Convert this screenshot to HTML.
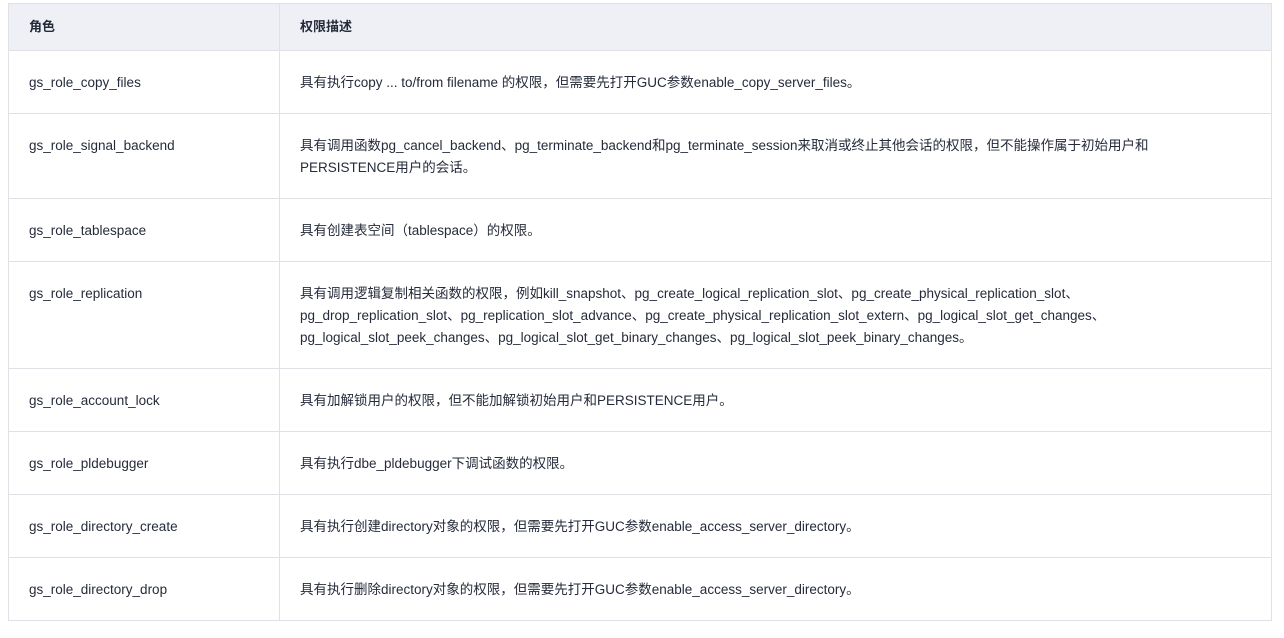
<!DOCTYPE html>
<html><head><meta charset="utf-8"><style>
body{margin:0;background:#fff;width:1284px;height:638px;overflow:hidden;font-family:"Liberation Sans","Noto Sans CJK SC",sans-serif;color:#252b3a;font-size:13.5px}
table{position:absolute;left:8px;top:3px;width:1264px;border-collapse:collapse;table-layout:fixed}
td,th{border:1px solid #dfe1e6;padding:0 0 0 20px;text-align:left;line-height:22px;white-space:nowrap}
td{vertical-align:top;padding-top:21px;padding-bottom:0}
th{background:#eef0f5;font-weight:bold;height:46px;font-size:13px;vertical-align:middle}
col.a{width:271px}
</style></head><body>
<table>
<colgroup><col class="a"><col></colgroup>
<tr><th>角色</th><th>权限描述</th></tr>
<tr style="height:63px"><td>gs_role_copy_files</td><td>具有执行copy ... to/from filename 的权限，但需要先打开GUC参数enable_copy_server_files。</td></tr>
<tr style="height:85px"><td>gs_role_signal_backend</td><td>具有调用函数pg_cancel_backend、pg_terminate_backend和pg_terminate_session来取消或终止其他会话的权限，但不能操作属于初始用户和<br>PERSISTENCE用户的会话。</td></tr>
<tr style="height:63px"><td>gs_role_tablespace</td><td>具有创建表空间（tablespace）的权限。</td></tr>
<tr style="height:107px"><td>gs_role_replication</td><td>具有调用逻辑复制相关函数的权限，例如kill_snapshot、pg_create_logical_replication_slot、pg_create_physical_replication_slot、<br>pg_drop_replication_slot、pg_replication_slot_advance、pg_create_physical_replication_slot_extern、pg_logical_slot_get_changes、<br>pg_logical_slot_peek_changes、pg_logical_slot_get_binary_changes、pg_logical_slot_peek_binary_changes。</td></tr>
<tr style="height:63px"><td>gs_role_account_lock</td><td>具有加解锁用户的权限，但不能加解锁初始用户和PERSISTENCE用户。</td></tr>
<tr style="height:63px"><td>gs_role_pldebugger</td><td>具有执行dbe_pldebugger下调试函数的权限。</td></tr>
<tr style="height:63px"><td>gs_role_directory_create</td><td>具有执行创建directory对象的权限，但需要先打开GUC参数enable_access_server_directory。</td></tr>
<tr style="height:63px"><td>gs_role_directory_drop</td><td>具有执行删除directory对象的权限，但需要先打开GUC参数enable_access_server_directory。</td></tr>
</table>
</body></html>
